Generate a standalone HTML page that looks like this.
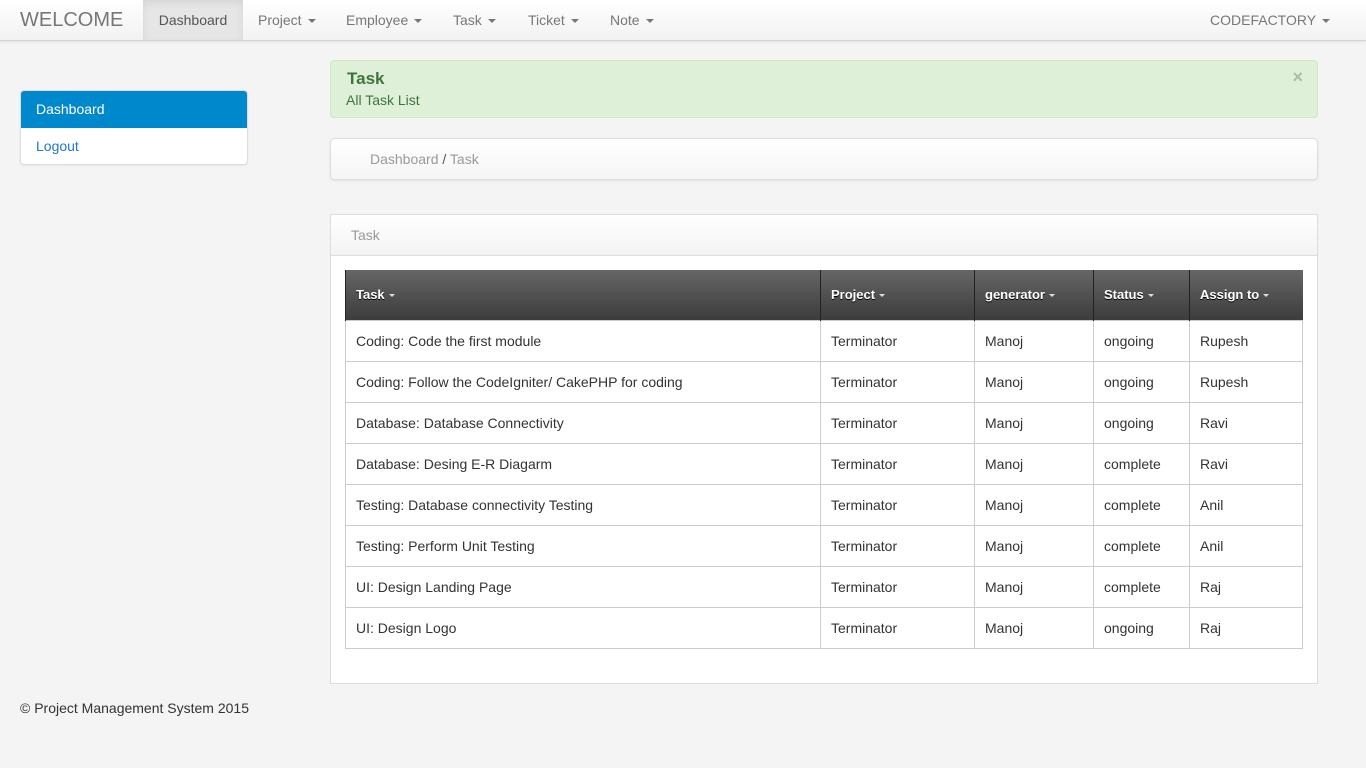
<!DOCTYPE html>
<html><head><style>
*{box-sizing:border-box;margin:0;padding:0}
body{width:1366px;height:768px;background:#f4f4f4;font-family:"Liberation Sans",sans-serif;font-size:14px;color:#333;position:relative;overflow:hidden}
.nav{position:absolute;left:0;top:0;width:1366px;height:41px;background:linear-gradient(#fff,#f2f2f2);border-bottom:1px solid #d4d4d4;box-shadow:0 1px 3px rgba(0,0,0,.08)}
.nav span{position:absolute;top:0;height:40px;line-height:40px;color:#777;font-size:14px}
.caret{display:inline-block;width:0;height:0;border-left:4px solid transparent;border-right:4px solid transparent;border-top:4px solid #777;vertical-align:middle;margin-left:6px}
.abs{position:absolute}
table{border-collapse:collapse;position:absolute;left:345px;top:270px;width:958px}
th{height:50px;background:linear-gradient(#666,#3c3c3c);color:#fff;font-weight:bold;font-size:13px;text-align:left;padding-left:10px;border-left:1px solid #222;text-shadow:0 1px 0 #000}
th .c{border-top-color:#ddd;border-left-width:3px;border-right-width:3px;border-top-width:3px;margin-left:4px}
td{height:41px;border:1px solid #ccc;padding-left:10px;background:#fff;font-size:14px}
</style></head><body>
<div class="nav">
<span style="left:20px;font-size:20px;color:#777">WELCOME</span>
<span style="left:143px;width:100px;background:#e6e6e6;text-align:center;color:#555;box-shadow:inset 0 3px 8px rgba(0,0,0,.08)">Dashboard</span>
<span style="left:258px">Project<i class="caret"></i></span>
<span style="left:346px">Employee<i class="caret"></i></span>
<span style="left:453px">Task<i class="caret"></i></span>
<span style="left:528px">Ticket<i class="caret"></i></span>
<span style="left:610px">Note<i class="caret"></i></span>
<span style="left:1210px">CODEFACTORY<i class="caret"></i></span>
</div>
<div class="abs" style="left:20px;top:90px;width:228px;height:75px;background:#fff;border:1px solid #ddd;border-radius:4px;overflow:hidden;box-shadow:0 1px 2px rgba(0,0,0,.05)">
<div style="height:37px;background:#0088cc;color:#fff;line-height:37px;padding-left:15px">Dashboard</div>
<div style="height:37px;line-height:37px;padding-left:15px;color:#1f7ac7">Logout</div>
</div>
<div class="abs" style="left:330px;top:60px;width:988px;height:58px;background:#dff0d8;border:1px solid #d0e6c4;border-radius:4px;color:#3c763d">
<div class="abs" style="left:16px;top:8px;font-size:17px;font-weight:bold">Task</div>
<div class="abs" style="left:15px;top:31px;font-size:14px">All Task List</div>
<div class="abs" style="right:14px;top:6px;font-size:18px;font-weight:bold;color:#a9bfa0">×</div>
</div>
<div class="abs" style="left:330px;top:138px;width:988px;height:42px;background:linear-gradient(#fff,#f5f5f5);border:1px solid #ddd;border-radius:4px;box-shadow:0 1px 2px rgba(0,0,0,.08);line-height:40px;padding-left:39px;color:#999">Dashboard <span style="color:#555">/</span> Task</div>
<div class="abs" style="left:330px;top:214px;width:988px;height:470px;background:#fff;border:1px solid #ddd">
<div style="height:41px;background:linear-gradient(#fff,#f3f3f3);border-bottom:1px solid #ddd;line-height:40px;padding-left:20px;color:#999">Task</div>
</div>
<table>
<tr><th style="width:475px">Task<i class="caret c"></i></th><th style="width:154px">Project<i class="caret c"></i></th><th style="width:119px">generator<i class="caret c"></i></th><th style="width:96px">Status<i class="caret c"></i></th><th>Assign to<i class="caret c"></i></th></tr>
<tr><td>Coding: Code the first module</td><td>Terminator</td><td>Manoj</td><td>ongoing</td><td>Rupesh</td></tr>
<tr><td>Coding: Follow the CodeIgniter/ CakePHP for coding</td><td>Terminator</td><td>Manoj</td><td>ongoing</td><td>Rupesh</td></tr>
<tr><td>Database: Database Connectivity</td><td>Terminator</td><td>Manoj</td><td>ongoing</td><td>Ravi</td></tr>
<tr><td>Database: Desing E-R Diagarm</td><td>Terminator</td><td>Manoj</td><td>complete</td><td>Ravi</td></tr>
<tr><td>Testing: Database connectivity Testing</td><td>Terminator</td><td>Manoj</td><td>complete</td><td>Anil</td></tr>
<tr><td>Testing: Perform Unit Testing</td><td>Terminator</td><td>Manoj</td><td>complete</td><td>Anil</td></tr>
<tr><td>UI: Design Landing Page</td><td>Terminator</td><td>Manoj</td><td>complete</td><td>Raj</td></tr>
<tr><td>UI: Design Logo</td><td>Terminator</td><td>Manoj</td><td>ongoing</td><td>Raj</td></tr>
</table>
<div class="abs" style="left:20px;top:700px;font-size:14px">© Project Management System 2015</div>
</body></html>
